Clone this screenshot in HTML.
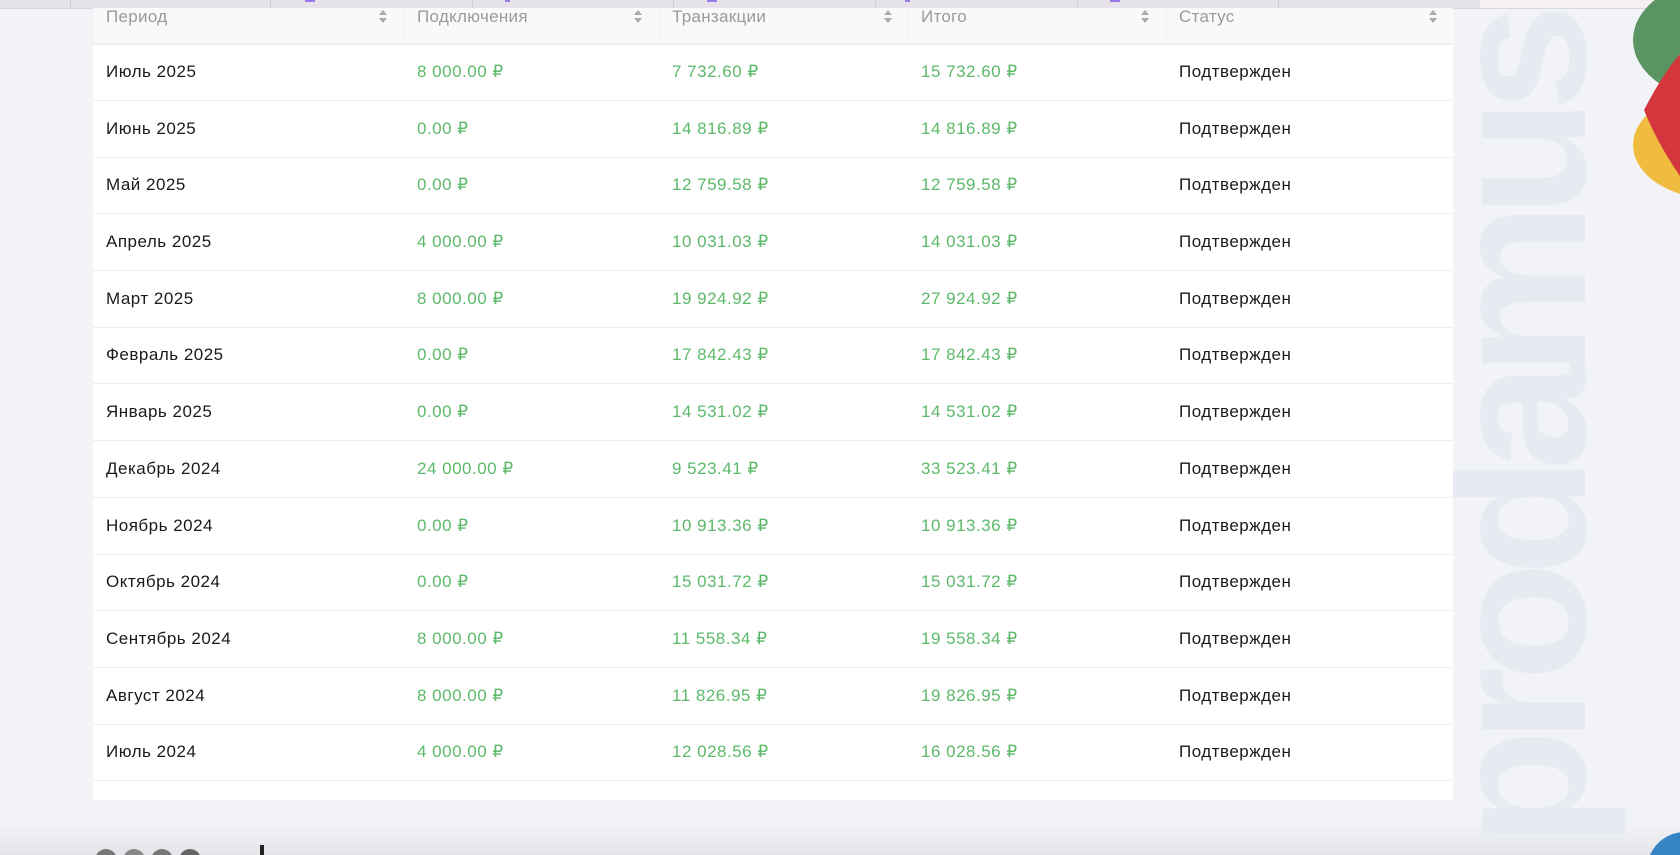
<!DOCTYPE html>
<html><head><meta charset="utf-8"><style>
html,body{margin:0;padding:0;width:1680px;height:855px;overflow:hidden;background:#f2f3f7;font-family:"Liberation Sans",sans-serif;position:relative}
.strip{position:absolute;left:0;top:0;width:1480px;height:8px;background:#e6e4ea;border-bottom:1px solid #d8d6de}
.strip2{position:absolute;left:1480px;top:0;width:200px;height:8px;background:#f6f0f5;border-bottom:1px solid #d8d6de}
.sep{position:absolute;top:0;width:1px;height:8px;background:#d0ced6}
.mk{position:absolute;top:0;width:10px;height:2px;background:#9a7ae8}
.wrapwm{position:absolute;left:0;top:0;width:1680px;height:855px;overflow:hidden}
.wm{position:absolute;left:1421px;top:848px;transform-origin:0 0;transform:rotate(-90deg);font-size:195px;font-weight:bold;color:#e6ebf2;white-space:nowrap;line-height:1;letter-spacing:-14px}
.tbl{position:absolute;left:93px;top:8px;width:1360px;height:792px;background:#fff}
.hdr{position:absolute;left:0;top:0;width:1360px;height:35px;background:#f9f9f9;border-bottom:2px solid #f0f0f0}
.h{position:absolute;top:0;height:35px;line-height:18px;font-size:17px;color:#9a9a9a;letter-spacing:.3px}
.arr{position:absolute;top:0;width:10px;height:18px}
.hs{position:absolute;top:0;width:1px;height:30px;background:#efefef}
.row{position:absolute;left:0;width:1360px;height:56px;border-bottom:1px solid #eeeeee}
.c{position:absolute;top:0;line-height:56px;font-size:17px;color:#1a1a1a;letter-spacing:.5px}
.g{color:#5cb96a}
</style></head><body>
<div class="strip"></div><div class="strip2"></div>
<div class="sep" style="left:70px"></div><div class="sep" style="left:270px"></div><div class="sep" style="left:472px"></div><div class="sep" style="left:673px"></div><div class="sep" style="left:875px"></div><div class="sep" style="left:1077px"></div><div class="sep" style="left:1278px"></div>
<div class="mk" style="left:305px"></div><div class="mk" style="left:505px;width:5px"></div><div class="mk" style="left:707px"></div><div class="mk" style="left:905px;width:5px"></div><div class="mk" style="left:1110px"></div>
<div style="position:absolute;left:0;top:825px;width:1680px;height:30px;background:linear-gradient(#f2f3f7,#e4e5e8)"></div>
<div class="wrapwm"><div class="wm">prodamus</div></div>
<svg style="position:absolute;left:1630px;top:0" width="50" height="200"><ellipse cx="95" cy="40" rx="92" ry="62" fill="#5a9463"/><ellipse cx="85" cy="145" rx="82" ry="54" fill="#efbc40"/><path d="M14 110 Q40 60 60 45 L60 190 Q30 150 14 110Z" fill="#d3363d"/></svg>
<svg style="position:absolute;left:1640px;top:825px" width="40" height="30"><circle cx="45" cy="45" r="38" fill="#3585c5"/></svg>
<div style="position:absolute;top:849px;left:95px;width:22px;height:22px;border-radius:50%;background:#777"></div>
<div style="position:absolute;top:849px;left:123px;width:22px;height:22px;border-radius:50%;background:#888"></div>
<div style="position:absolute;top:849px;left:151px;width:22px;height:22px;border-radius:50%;background:#777"></div>
<div style="position:absolute;top:849px;left:179px;width:22px;height:22px;border-radius:50%;background:#666"></div>
<div style="position:absolute;top:845px;left:260px;width:4px;height:10px;background:#222"></div>
<div class="tbl">
<div class="hdr">
<div class="h" style="left:13px">Период</div><div class="h" style="left:324px">Подключения</div><div class="h" style="left:579px">Транзакции</div><div class="h" style="left:828px">Итого</div><div class="h" style="left:1086px">Статус</div>
<div class="hs" style="left:311px"></div><div class="hs" style="left:566px"></div><div class="hs" style="left:815px"></div><div class="hs" style="left:1073px"></div>
<svg class="arr" style="left:285px" viewBox="0 0 10 18"><path d="M1 7 L5 2 L9 7Z M1 10 L5 15 L9 10Z" fill="#aaa"/></svg>
<svg class="arr" style="left:540px" viewBox="0 0 10 18"><path d="M1 7 L5 2 L9 7Z M1 10 L5 15 L9 10Z" fill="#aaa"/></svg>
<svg class="arr" style="left:790px" viewBox="0 0 10 18"><path d="M1 7 L5 2 L9 7Z M1 10 L5 15 L9 10Z" fill="#aaa"/></svg>
<svg class="arr" style="left:1047px" viewBox="0 0 10 18"><path d="M1 7 L5 2 L9 7Z M1 10 L5 15 L9 10Z" fill="#aaa"/></svg>
<svg class="arr" style="left:1335px" viewBox="0 0 10 18"><path d="M1 7 L5 2 L9 7Z M1 10 L5 15 L9 10Z" fill="#aaa"/></svg>
</div>
<div class="row" style="top:36px"><div class="c" style="left:13px">Июль 2025</div><div class="c g" style="left:324px">8 000.00 ₽</div><div class="c g" style="left:579px">7 732.60 ₽</div><div class="c g" style="left:828px">15 732.60 ₽</div><div class="c" style="left:1086px">Подтвержден</div></div>
<div class="row" style="top:93px"><div class="c" style="left:13px">Июнь 2025</div><div class="c g" style="left:324px">0.00 ₽</div><div class="c g" style="left:579px">14 816.89 ₽</div><div class="c g" style="left:828px">14 816.89 ₽</div><div class="c" style="left:1086px">Подтвержден</div></div>
<div class="row" style="top:149px"><div class="c" style="left:13px">Май 2025</div><div class="c g" style="left:324px">0.00 ₽</div><div class="c g" style="left:579px">12 759.58 ₽</div><div class="c g" style="left:828px">12 759.58 ₽</div><div class="c" style="left:1086px">Подтвержден</div></div>
<div class="row" style="top:206px"><div class="c" style="left:13px">Апрель 2025</div><div class="c g" style="left:324px">4 000.00 ₽</div><div class="c g" style="left:579px">10 031.03 ₽</div><div class="c g" style="left:828px">14 031.03 ₽</div><div class="c" style="left:1086px">Подтвержден</div></div>
<div class="row" style="top:263px"><div class="c" style="left:13px">Март 2025</div><div class="c g" style="left:324px">8 000.00 ₽</div><div class="c g" style="left:579px">19 924.92 ₽</div><div class="c g" style="left:828px">27 924.92 ₽</div><div class="c" style="left:1086px">Подтвержден</div></div>
<div class="row" style="top:319px"><div class="c" style="left:13px">Февраль 2025</div><div class="c g" style="left:324px">0.00 ₽</div><div class="c g" style="left:579px">17 842.43 ₽</div><div class="c g" style="left:828px">17 842.43 ₽</div><div class="c" style="left:1086px">Подтвержден</div></div>
<div class="row" style="top:376px"><div class="c" style="left:13px">Январь 2025</div><div class="c g" style="left:324px">0.00 ₽</div><div class="c g" style="left:579px">14 531.02 ₽</div><div class="c g" style="left:828px">14 531.02 ₽</div><div class="c" style="left:1086px">Подтвержден</div></div>
<div class="row" style="top:433px"><div class="c" style="left:13px">Декабрь 2024</div><div class="c g" style="left:324px">24 000.00 ₽</div><div class="c g" style="left:579px">9 523.41 ₽</div><div class="c g" style="left:828px">33 523.41 ₽</div><div class="c" style="left:1086px">Подтвержден</div></div>
<div class="row" style="top:490px"><div class="c" style="left:13px">Ноябрь 2024</div><div class="c g" style="left:324px">0.00 ₽</div><div class="c g" style="left:579px">10 913.36 ₽</div><div class="c g" style="left:828px">10 913.36 ₽</div><div class="c" style="left:1086px">Подтвержден</div></div>
<div class="row" style="top:546px"><div class="c" style="left:13px">Октябрь 2024</div><div class="c g" style="left:324px">0.00 ₽</div><div class="c g" style="left:579px">15 031.72 ₽</div><div class="c g" style="left:828px">15 031.72 ₽</div><div class="c" style="left:1086px">Подтвержден</div></div>
<div class="row" style="top:603px"><div class="c" style="left:13px">Сентябрь 2024</div><div class="c g" style="left:324px">8 000.00 ₽</div><div class="c g" style="left:579px">11 558.34 ₽</div><div class="c g" style="left:828px">19 558.34 ₽</div><div class="c" style="left:1086px">Подтвержден</div></div>
<div class="row" style="top:660px"><div class="c" style="left:13px">Август 2024</div><div class="c g" style="left:324px">8 000.00 ₽</div><div class="c g" style="left:579px">11 826.95 ₽</div><div class="c g" style="left:828px">19 826.95 ₽</div><div class="c" style="left:1086px">Подтвержден</div></div>
<div class="row" style="top:716px"><div class="c" style="left:13px">Июль 2024</div><div class="c g" style="left:324px">4 000.00 ₽</div><div class="c g" style="left:579px">12 028.56 ₽</div><div class="c g" style="left:828px">16 028.56 ₽</div><div class="c" style="left:1086px">Подтвержден</div></div>
</div>
</body></html>
